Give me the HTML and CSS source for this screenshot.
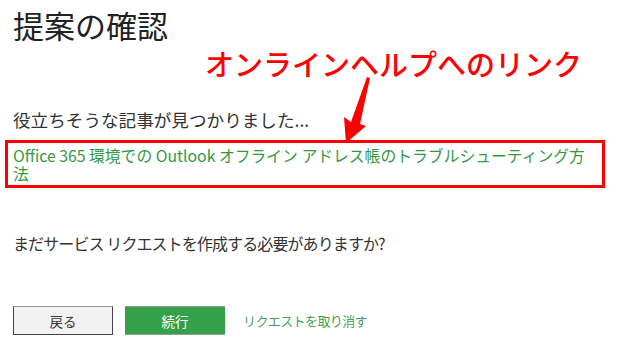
FILE: index.html
```html
<!DOCTYPE html>
<html lang="ja">
<head>
<meta charset="utf-8">
<link rel="stylesheet" href="styles.css">
</head>
<body>
<div class="page">
  <h1 class="title">提案の確認</h1>
  <div class="note">オンラインヘルプへのリンク</div>
  <svg class="arrow" width="40" height="70" viewBox="0 0 40 70">
    <polygon points="26,0 29,1 19,47 25,49 5,66 3,40 10,45" fill="#ff0000"/>
  </svg>
  <p class="found">役立ちそうな記事が見つかりました...</p>
  <div class="linkbox">
    <a class="article" href="#">Office 365 環境での Outlook オフライン アドレス帳のトラブルシューティング方法</a>
  </div>
  <p class="question">まだサービス リクエストを作成する必要がありますか?</p>
  <div class="actions">
    <button class="btn btn-back">戻る</button>
    <button class="btn btn-next">続行</button>
    <a class="cancel" href="#">リクエストを取り消す</a>
  </div>
</div>
</body>
</html>
```

FILE: styles.css
```css
html, body {
  margin: 0;
  padding: 0;
  background: #ffffff;
}
body {
  font-family: "Noto Sans CJK JP", "Noto Sans", sans-serif;
  color: #333333;
  width: 631px;
  height: 354px;
  overflow: hidden;
}
.page {
  position: relative;
  padding: 0 0 0 13px;
}
.title {
  margin: 0;
  padding-top: 5px;
  font-size: 31px;
  font-weight: 400;
  line-height: 40px;
  color: #222222;
}
.note {
  margin: 0 0 0 192px;
  font-size: 29px;
  line-height: 36px;
  color: #ff0000;
  font-weight: 500;
}
.arrow {
  position: absolute;
  left: 341px;
  top: 77px;
}
.found {
  margin: 27px 0 0 0;
  font-size: 17.6px;
  line-height: 24px;
}
.linkbox {
  margin: 8px 0 0 -8px;
  width: 581px;
  border: 3px solid #ff0000;
  padding: 4px 8px 2px 5px;
}
.article {
  color: #339944;
  text-decoration: none;
  font-size: 15.8px;
  line-height: 18px;
  display: block;
}
.question {
  margin: 44px 0 0 0;
  font-size: 16px;
  letter-spacing: -0.9px;
  line-height: 22px;
}
.actions {
  display: flex;
  align-items: center;
  margin-top: 52px;
}
.btn {
  width: 100px;
  height: 29px;
  font-family: inherit;
  font-size: 13.5px;
  padding: 0;
  margin: 0;
}
.btn-back {
  background: #f2f2f2;
  color: #333333;
  border: 1px solid #444444;
  border-top-color: #999999;
}
.btn-next {
  margin-left: 12px;
  background: #35a04a;
  color: #ffffff;
  border: none;
  border-top: 1px solid #999999;
  border-bottom: 1px solid #999999;
}
.cancel {
  margin-left: 18px;
  color: #44a155;
  text-decoration: none;
  font-size: 13px;
  letter-spacing: -0.6px;
}
```
